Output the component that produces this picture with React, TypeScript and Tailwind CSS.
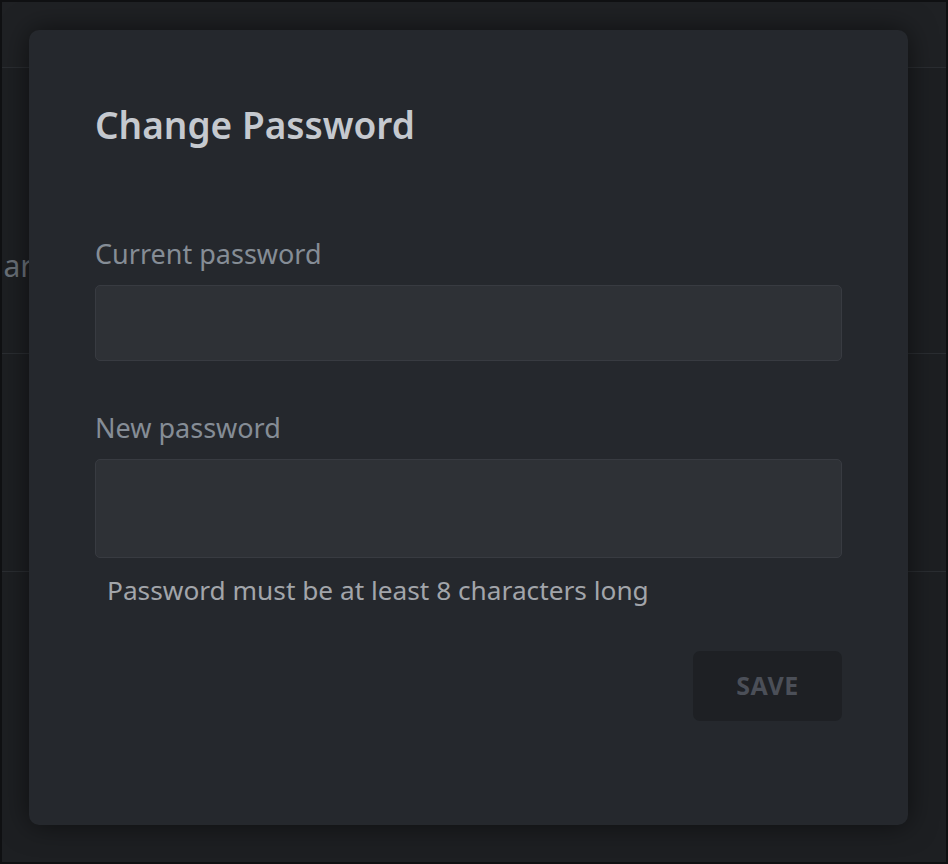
import React from 'react';

const font = { fontFamily: '"Noto Sans", Lato, sans-serif' };

const App: React.FC = () => {
  return (
    <div
      className="relative h-[864px] w-full overflow-hidden border-2 border-[#0f1012] bg-[#1d1f22]"
      style={font}
    >
      {/* Page behind the dialog */}
      <div className="h-[66px] border-b border-[#2a2d31] bg-[#1f2124]" />
      <div className="flex h-[286px] items-start border-b border-[#2a2d31] pt-[183px]">
        <div className="flex w-[46px] justify-end overflow-hidden">
          <span className="whitespace-nowrap text-[30px] leading-[30px] text-[#6a7078]">Primary</span>
        </div>
      </div>
      <div className="h-[218px] border-b border-[#2a2d31]" />

      {/* Dialog */}
      <div className="absolute left-[27px] top-[28px] flex h-[795px] w-[879px] flex-col rounded-[10px] bg-[#25282d] px-[66px] pt-[76px] shadow-[0_0_28px_rgba(0,0,0,0.55)]">
        <h2 className="h-[38px] text-[37px] font-semibold leading-[38px] text-[#c5c9cf]">Change Password</h2>

        <label className="mt-[97px] h-[26px] text-[27px] leading-[26px] text-[#858d96]">Current password</label>
        <input
          type="password"
          className="mt-[18px] h-[76px] w-full rounded-[5px] border border-[#383b41] bg-[#2e3136] px-4 text-[26px] text-[#c5c9cf] outline-none"
        />

        <label className="mt-[54px] h-[26px] text-[27px] leading-[26px] text-[#858d96]">New password</label>
        <input
          type="password"
          className="mt-[18px] h-[99px] w-full rounded-[5px] border border-[#383b41] bg-[#2e3136] px-4 text-[26px] text-[#c5c9cf] outline-none"
        />
        <p className="mt-[19px] h-[26px] pl-[12px] text-[26.25px] leading-[26px] text-[#a2a5aa]">
          Password must be at least 8 characters long
        </p>

        <button
          disabled
          className="mt-[48px] flex h-[70px] w-[149px] items-center justify-center self-end rounded-[7px] bg-[#1e2024] text-[25px] font-bold tracking-[0.5px] text-[#4b4f58]"
        >
          SAVE
        </button>
      </div>
    </div>
  );
};

export default App;
